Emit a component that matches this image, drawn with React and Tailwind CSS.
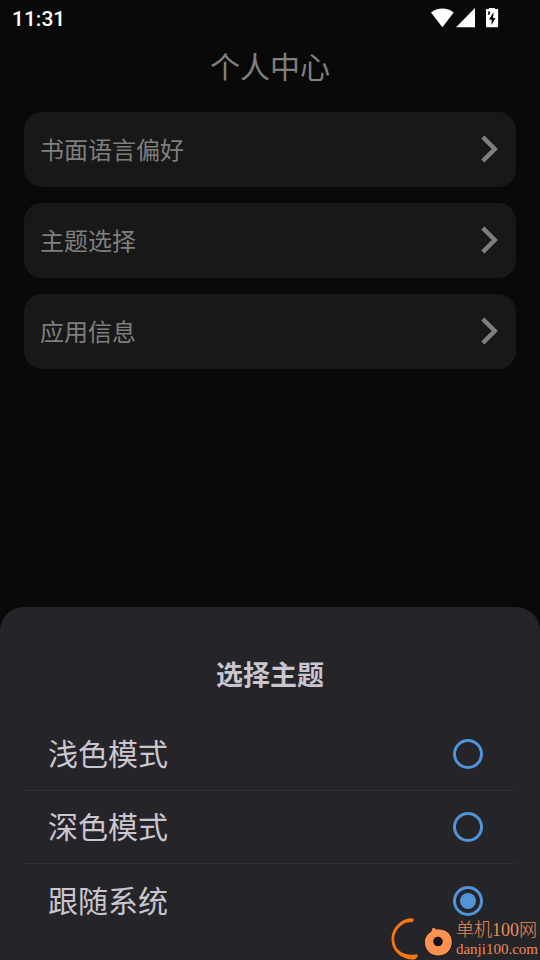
import { useState } from "react";

const SETTINGS = ["书面语言偏好", "主题选择", "应用信息"];

const THEMES = [
  { id: "light", label: "浅色模式" },
  { id: "dark", label: "深色模式" },
  { id: "system", label: "跟随系统" },
];

function StatusBar() {
  return (
    <div className="flex h-9 items-center justify-between pr-10 pl-3 text-white">
      <span className="pt-0.5 font-[Roboto,sans-serif] text-[21px] leading-6 font-medium">11:31</span>
      <svg className="h-5 w-[70px]" viewBox="0 0 70 20" fill="currentColor" aria-hidden="true">
        <path d="M1 4.6C4.2 1.8 8 .4 12.3.4s8.200 1.400 11.400 4.200L12.400 19.200Z" />
        <path d="M45 0v19.200H26Z" />
        <path
          fillRule="evenodd"
          d="M59 -.8h6v1.900h2.100c.6 0 1 .4 1 1v16.200c0 .6-.4 1-1 1H57c-.6 0-1-.4-1-1V2.100c0-.6.4-1 1-1h2ZM63.500 4l-4.500 7.500h2.500V17l4-7h-2.400ZM58.200 3.500h2v1l-1 2.500h-1Z"
        />
      </svg>
    </div>
  );
}

function SettingRow({ label }) {
  return (
    <button
      type="button"
      className="flex h-[75px] w-full items-center justify-between rounded-[18px] bg-[#181818] px-4 pb-0.5 text-left text-2xl text-[#7f7f7f]"
    >
      <span>{label}</span>
      <svg className="h-8 w-5" viewBox="0 0 20 32" fill="none" stroke="currentColor" strokeWidth="4.500" aria-hidden="true">
        <path d="M2.800 4 14.800 16 2.800 28" />
      </svg>
    </button>
  );
}

function ThemeOption({ id, label, checked, onChange }) {
  return (
    <label htmlFor={id} className="flex h-[73px] items-center justify-between pr-[33px] pl-6 text-3xl text-[#cac6d0]">
      <span className="pb-1">{label}</span>
      <input
        id={id}
        type="radio"
        name="theme"
        value={id}
        checked={checked}
        onChange={onChange}
        className="grid size-[30px] appearance-none place-items-center rounded-full border-3 border-[#5294d8] before:size-4 before:rounded-full checked:before:bg-[#5294d8] checked:before:content-['']"
      />
    </label>
  );
}

function Watermark() {
  return (
    <div className="absolute right-0 bottom-0 flex items-end pr-0.5" lang="zh">
      <svg className="h-[43px] w-[66px]" viewBox="0 0 66 43" aria-hidden="true">
        <path
          fill="#f97510"
          d="M22 1.300C24.500 1.500 24 5 21.500 5.200 17 5 14 6 11 8.800 6 13 4.200 17.500 4.300 22.500 4.500 29.500 8 34.500 15 36.800 19.500 38 23 37.800 28 37.600 27.500 40.500 26 43 22 42.600 15 42 8.500 38.500 5 33.500 2.200 29.500 1.300 25 1.500 20.500 2 13 7.500 6 14 3 17 1.800 19.500 1.200 22 1.300Z"
        />
        <g stroke="#15131a" strokeWidth="1">
          <path fill="#fd9250" d="M41 14.500c0-2.400 1.200-4 2.600-4 1.400 0 2 1.500 3.600 1.400 8.900-.6 15.100 5 15.100 13.100 0 8-6 14-14 14s-14-6-14-14c0-4.600 3.200-8.500 6.700-10.500Z" />
        </g>
        <circle cx="48" cy="24.500" r="4.800" fill="#15131a" />
      </svg>
      <div className="flex flex-col pb-0.5 font-['Liberation_Serif','Noto_Sans_CJK_SC',serif] font-light text-[#ee8c56]">
        <span className="text-[18px] leading-5">单机100网</span>
        <span className="text-[15px] leading-[18px]">danji100.com</span>
      </div>
    </div>
  );
}

export default function App() {
  const [theme, setTheme] = useState("system");

  return (
    <div className="relative flex min-h-screen flex-col bg-[#090909] font-['Noto_Sans_CJK_SC',sans-serif]" lang="zh-CN">
      <StatusBar />
      <h1 className="pt-[7px] pb-px text-center text-3xl leading-[44px] text-[#7f7f7f]">个人中心</h1>
      <main className="flex flex-col gap-4 px-6 pt-6 pb-8">
        {SETTINGS.map((label) => (
          <SettingRow key={label} label={label} />
        ))}
      </main>

      <section role="dialog" aria-labelledby="theme-title" className="mt-auto rounded-t-3xl bg-[#252429] px-6 pt-[47px] pb-[23px]">
        <h2 id="theme-title" className="pb-6 text-center text-[27px] leading-10 font-bold text-[#cac6d0]">
          选择主题
        </h2>
        <fieldset aria-labelledby="theme-title" className="divide-y divide-[#302f34]">
          {THEMES.map(({ id, label }) => (
            <ThemeOption key={id} id={id} label={label} checked={theme === id} onChange={() => setTheme(id)} />
          ))}
        </fieldset>
      </section>

      <Watermark />
    </div>
  );
}
